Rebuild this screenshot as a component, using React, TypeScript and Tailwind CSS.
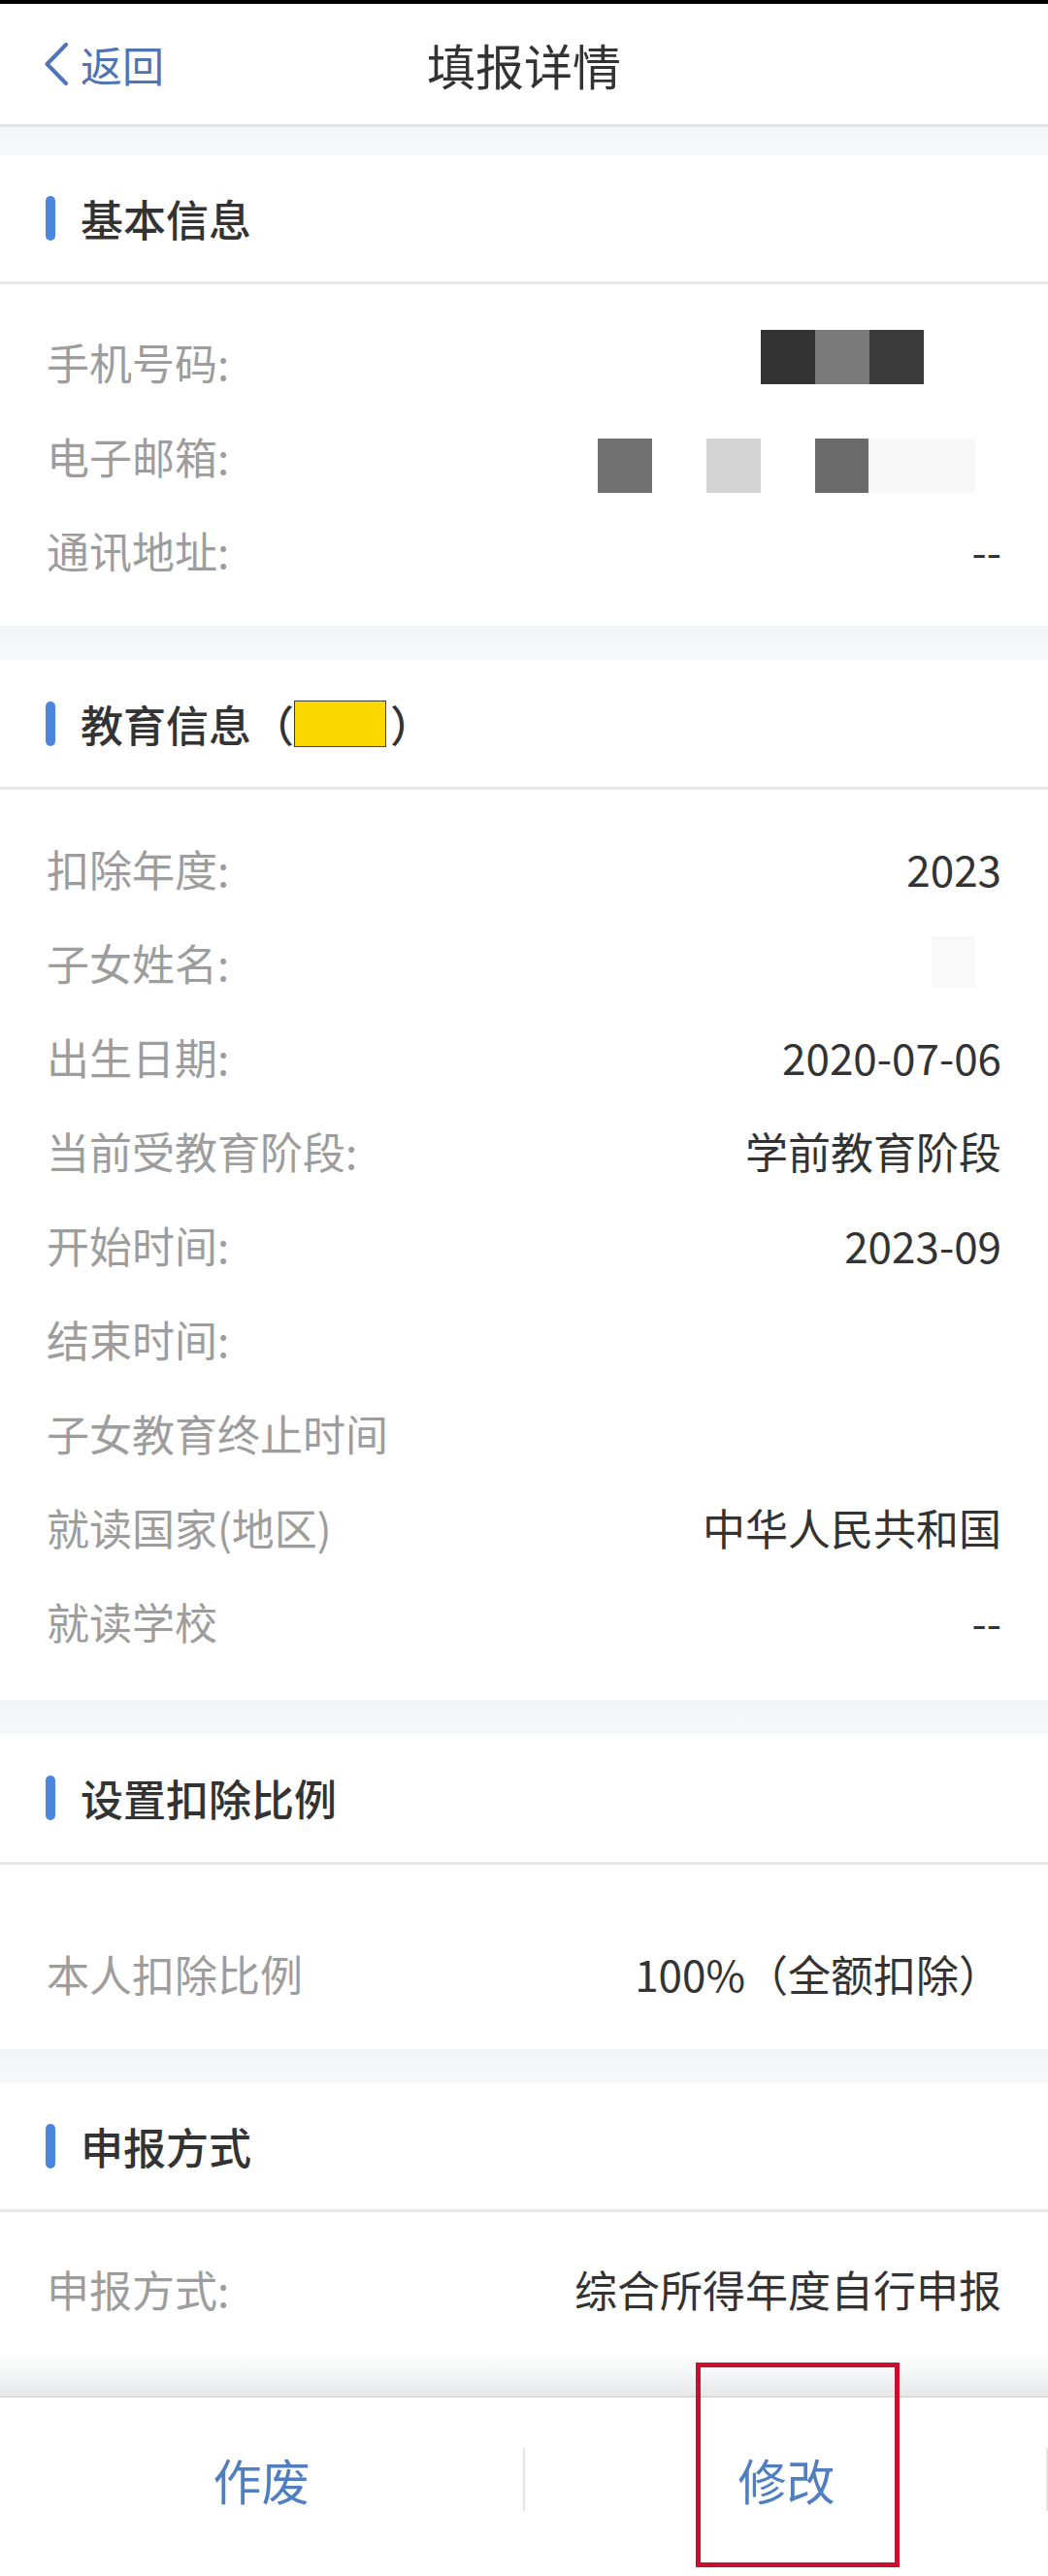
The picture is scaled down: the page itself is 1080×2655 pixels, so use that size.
import React from 'react';

const font = { fontFamily: '"Noto Sans CJK SC", "Noto Sans", sans-serif' };

const Row = ({ label, value }: { label: string; value?: React.ReactNode }) => (
  <div className="flex h-[97px] items-center justify-between">
    <span className="text-[44px] leading-none text-[#9d9d9d]">{label}</span>
    <span className="text-[44px] leading-none text-[#333333]">{value}</span>
  </div>
);

const SectionTitle = ({ children, h = 'h-[133px]' }: { children: React.ReactNode; h?: string }) => (
  <div className={`flex ${h} items-center border-b-[3px] border-[#e8e8e8] bg-white pl-[47px]`}>
    <div className="h-[46px] w-[10px] rounded-full bg-[#4a86e0]" />
    <div className="ml-[26px] flex items-center text-[44px] font-medium leading-none text-[#333333]">
      {children}
    </div>
  </div>
);

const Gap = ({ h = 'h-[35px]' }: { h?: string }) => (
  <div className={`${h} bg-gradient-to-b from-[#f3f4f6] to-[#f8f9fb]`} />
);

const App = () => {
  return (
    <div className="w-[1080px] h-[2655px] overflow-hidden bg-white" style={font}>
      <div className="h-[4px] bg-black" />

      <div className="grid h-[127px] grid-cols-[1fr_auto_1fr] items-center border-b-[3px] border-[#e3e3e3]">
        <div className="flex items-center pl-[45px]">
          <svg width="26" height="44" viewBox="0 0 26 44" fill="none">
            <path d="M23 2 L3.5 22 L23 42" stroke="#4f74b8" strokeWidth="4" strokeLinecap="round" strokeLinejoin="round" />
          </svg>
          <span className="ml-[12px] text-[43px] leading-none text-[#4f74b4]">返回</span>
        </div>
        <div className="text-[50px] leading-none text-[#333333]">填报详情</div>
        <div />
      </div>

      <Gap h="h-[29px]" />
      <SectionTitle>基本信息</SectionTitle>
      <div className="px-[48px] pt-[31px] pb-[30px]">
        <Row
          label="手机号码:"
          value={
            <span className="mr-[80px] flex h-[56px] -translate-y-[5px]">
              <span className="w-[56px] bg-[#333333]" />
              <span className="w-[56px] bg-[#7a7a7a]" />
              <span className="w-[56px] bg-[#3b3b3b]" />
            </span>
          }
        />
        <Row
          label="电子邮箱:"
          value={
            <span className="mr-[27px] flex h-[56px] translate-y-[10px]">
              <span className="w-[56px] bg-[#717171]" />
              <span className="w-[56px] bg-white" />
              <span className="w-[56px] bg-[#d4d4d4]" />
              <span className="w-[56px] bg-white" />
              <span className="w-[55px] bg-[#6b6b6b]" />
              <span className="w-[110px] bg-[#f8f8f8]" />
            </span>
          }
        />
        <Row label="通讯地址:" value="--" />
      </div>

      <Gap />
      <SectionTitle h="h-[134px]">
        <span>教育信息</span>
        <span>（</span>
        <span className="h-[48px] w-[95px] border border-[#3a3a3a] bg-[#fcd800]" />
        <span className="ml-[4px]">）</span>
      </SectionTitle>
      <div className="px-[48px] pt-[32px] pb-[33px]">
        <Row label="扣除年度:" value="2023" />
        <Row
          label="子女姓名:"
          value={<span className="mr-[27px] block h-[53px] w-[45px] bg-[#f9f9f9]" />}
        />
        <Row label="出生日期:" value="2020-07-06" />
        <Row label="当前受教育阶段:" value="学前教育阶段" />
        <Row label="开始时间:" value="2023-09" />
        <Row label="结束时间:" />
        <Row label="子女教育终止时间" />
        <Row label="就读国家(地区)" value="中华人民共和国" />
        <Row label="就读学校" value="--" />
      </div>

      <Gap />
      <SectionTitle h="h-[135px]">设置扣除比例</SectionTitle>
      <div className="px-[48px] pt-[63px] pb-[30px]">
        <Row label="本人扣除比例" value="100%（全额扣除）" />
      </div>

      <Gap />
      <SectionTitle>申报方式</SectionTitle>
      <div className="h-[145px] px-[48px] pt-[30px]">
        <Row label="申报方式:" value="综合所得年度自行申报" />
      </div>

      <div className="h-[45px] bg-gradient-to-b from-white via-[#f4f5f6] to-[#e6e7e9]" />
      <div className="relative flex h-[182px] border-t border-[#cfcfcf] bg-white">
        <div className="flex flex-1 items-center justify-center pb-[14px]">
          <span className="text-[50px] leading-none text-[#4f7fc0]">作废</span>
        </div>
        <div className="mt-[52px] h-[65px] w-[2px] bg-[#e4e4e4]" />
        <div className="relative flex flex-1 items-center justify-center pb-[14px]">
          <span className="text-[50px] leading-none text-[#4f7fc0]">修改</span>
          <div className="absolute left-[176px] top-[-36px] h-[211px] w-[210px] border-[5px] border-[#c8102e]" />
        </div>
        <div className="absolute right-0 top-[52px] h-[65px] w-[2px] bg-[#e4e4e4]" />
      </div>
    </div>
  );
};

export default App;
